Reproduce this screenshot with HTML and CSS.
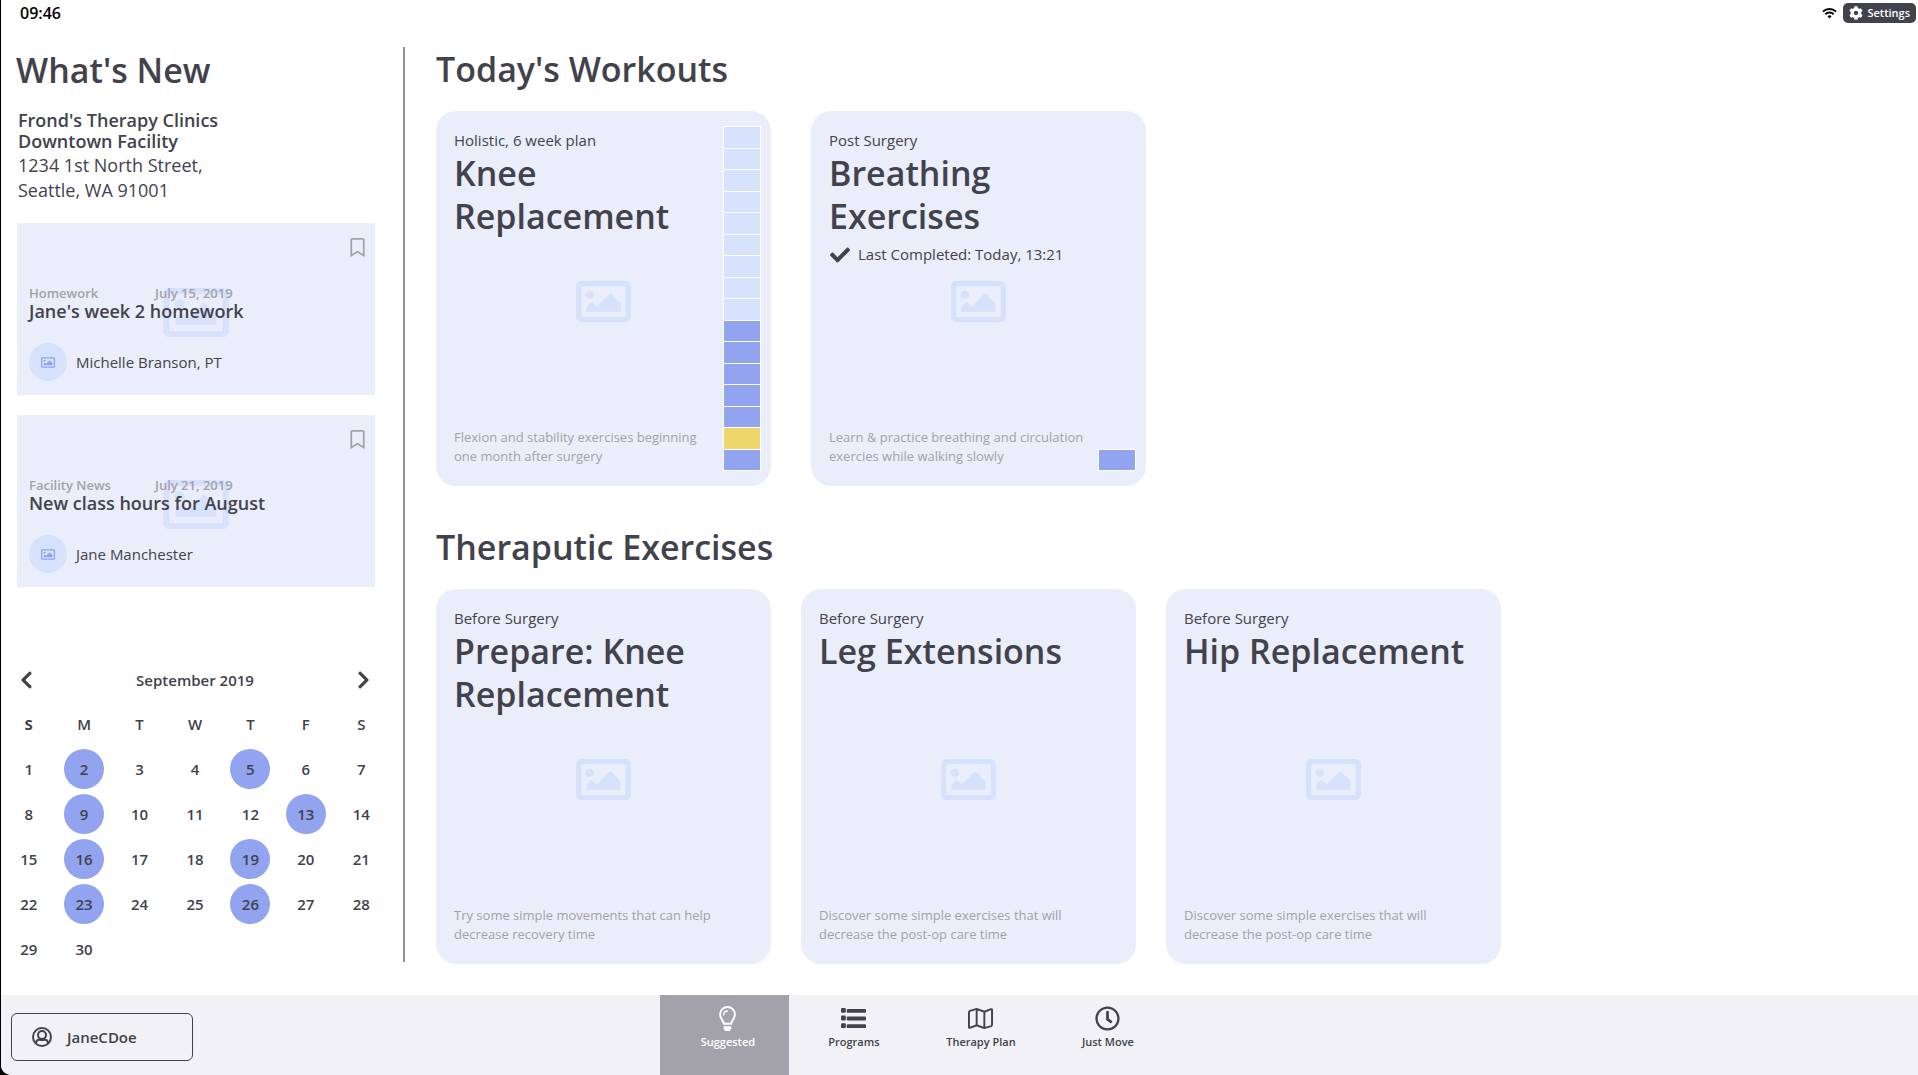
FILE: index.html
```html
<!DOCTYPE html>
<html lang="en">
<head>
  <meta charset="UTF-8">
  <meta name="viewport" content="width=device-width, initial-scale=1.0">
  <title>Frond's Therapy Clinics</title>
  <link rel="stylesheet" href="styles.css">
</head>
<body>
  <!-- shared icons -->
  <svg class="sprite" aria-hidden="true">
    <symbol id="image" viewBox="0 64 512 384">
      <path d="M464 64H48C21.49 64 0 85.49 0 112v288c0 26.51 21.49 48 48 48h416c26.51 0 48-21.49 48-48V112c0-26.51-21.49-48-48-48zm-6 336H54a6 6 0 0 1-6-6V118a6 6 0 0 1 6-6h404a6 6 0 0 1 6 6v276a6 6 0 0 1-6 6zM128 152c-22.091 0-40 17.909-40 40s17.909 40 40 40 40-17.909 40-40-17.909-40-40-40zM96 352h320v-80l-87.515-87.515c-4.686-4.686-12.284-4.686-16.971 0L192 304l-39.515-39.515c-4.686-4.686-12.284-4.686-16.971 0L96 304v48z"/>
    </symbol>
    <symbol id="bookmark" viewBox="0 0 384 512">
      <path d="M336 0H48C21.49 0 0 21.49 0 48v464l192-112 192 112V48c0-26.51-21.49-48-48-48zm0 428.43l-144-84-144 84V54a6 6 0 0 1 6-6h276c3.314 0 6 2.683 6 5.996V428.43z"/>
    </symbol>
  </svg>

  <div class="app">
    <header class="status-bar">
      <time>09:46</time>
      <div class="status-right">
        <svg class="wifi" viewBox="0 0 16 12" fill="none" stroke="#000" stroke-width="2">
          <path d="M1 4.6a10 10 0 0 1 14 0M3.6 7.3a6.2 6.2 0 0 1 8.8 0"/>
          <path d="M8 11.8L5.8 9.5a3.1 3.1 0 0 1 4.4 0z" fill="#000" stroke="none"/>
        </svg>
        <button class="settings" type="button">
          <svg viewBox="0 0 512 512"><path d="M487.4 315.7l-42.6-24.6c4.3-23.2 4.3-47 0-70.2l42.6-24.6c4.9-2.8 7.1-8.6 5.5-14-11.1-35.6-30-67.8-54.7-94.6-3.8-4.1-10-5.1-14.8-2.3L380.8 110c-17.9-15.4-38.5-27.3-60.8-35.1V25.8c0-5.6-3.9-10.5-9.4-11.7-36.7-8.2-74.3-7.8-109.2 0-5.5 1.2-9.4 6.1-9.4 11.7V75c-22.2 7.9-42.8 19.8-60.8 35.1L88.7 85.5c-4.9-2.8-11-1.9-14.8 2.3-24.7 26.7-43.6 58.9-54.7 94.6-1.7 5.4.6 11.2 5.5 14L67.3 221c-4.3 23.2-4.3 47 0 70.2l-42.6 24.6c-4.9 2.8-7.1 8.6-5.5 14 11.1 35.6 30 67.8 54.7 94.6 3.8 4.1 10 5.1 14.8 2.3l42.6-24.6c17.9 15.4 38.5 27.3 60.8 35.1v49.2c0 5.6 3.9 10.5 9.4 11.7 36.7 8.2 74.3 7.8 109.2 0 5.5-1.2 9.4-6.1 9.4-11.7v-49.2c22.2-7.9 42.8-19.8 60.8-35.1l42.6 24.6c4.9 2.8 11 1.9 14.8-2.3 24.7-26.7 43.6-58.9 54.7-94.6 1.5-5.5-.7-11.3-5.6-14.1zM256 336c-44.1 0-80-35.9-80-80s35.9-80 80-80 80 35.9 80 80-35.9 80-80 80z"/></svg>
          Settings
        </button>
      </div>
    </header>

    <div class="content">
      <aside class="sidebar">
        <h1>What's New</h1>
        <address>
          <strong>Frond's Therapy Clinics<br>Downtown Facility</strong>
          1234 1st North Street,<br>Seattle, WA 91001
        </address>

        <div class="news">
          <article class="news-card">
            <svg class="placeholder"><use href="#image"/></svg>
            <button class="bookmark" type="button" aria-label="Bookmark"><svg><use href="#bookmark"/></svg></button>
            <p class="news-meta"><span>Homework</span><span>July 15, 2019</span></p>
            <h3>Jane's week 2 homework</h3>
            <p class="author"><span class="avatar"><svg><use href="#image"/></svg></span>Michelle Branson, PT</p>
          </article>
          <article class="news-card">
            <svg class="placeholder"><use href="#image"/></svg>
            <button class="bookmark" type="button" aria-label="Bookmark"><svg><use href="#bookmark"/></svg></button>
            <p class="news-meta"><span>Facility News</span><span>July 21, 2019</span></p>
            <h3>New class hours for August</h3>
            <p class="author"><span class="avatar"><svg><use href="#image"/></svg></span>Jane Manchester</p>
          </article>
        </div>

        <div class="calendar">
          <div class="calendar-head">
            <button type="button" aria-label="Previous month">
              <svg viewBox="0 0 320 512"><path d="M34.52 239.03L228.87 44.69c9.37-9.37 24.57-9.37 33.94 0l22.67 22.67c9.36 9.36 9.37 24.52.04 33.9L131.49 256l154.02 154.75c9.34 9.38 9.32 24.54-.04 33.9l-22.67 22.67c-9.37 9.37-24.57 9.37-33.94 0L34.52 272.97c-9.37-9.37-9.37-24.57 0-33.94z"/></svg>
            </button>
            <span>September 2019</span>
            <button type="button" aria-label="Next month">
              <svg viewBox="0 0 320 512"><path d="M285.476 272.971L91.132 467.314c-9.373 9.373-24.569 9.373-33.941 0l-22.667-22.667c-9.357-9.357-9.375-24.522-.04-33.901L188.505 256 34.484 101.255c-9.335-9.379-9.317-24.544.04-33.901l22.667-22.667c9.373-9.373 24.569-9.373 33.941 0L285.475 239.03c9.373 9.372 9.373 24.568.001 33.941z"/></svg>
            </button>
          </div>
          <table>
            <thead>
              <tr><th class="first">S</th><th>M</th><th>T</th><th>W</th><th>T</th><th>F</th><th>S</th></tr>
            </thead>
            <tbody>
              <tr><td>1</td><td><span class="marked">2</span></td><td>3</td><td>4</td><td><span class="marked">5</span></td><td>6</td><td>7</td></tr>
              <tr><td>8</td><td><span class="marked">9</span></td><td>10</td><td>11</td><td>12</td><td><span class="marked">13</span></td><td>14</td></tr>
              <tr><td>15</td><td><span class="marked">16</span></td><td>17</td><td>18</td><td><span class="marked">19</span></td><td>20</td><td>21</td></tr>
              <tr><td>22</td><td><span class="marked">23</span></td><td>24</td><td>25</td><td><span class="marked">26</span></td><td>27</td><td>28</td></tr>
              <tr><td>29</td><td>30</td><td></td><td></td><td></td><td></td><td></td></tr>
            </tbody>
          </table>
        </div>
      </aside>

      <main>
        <section>
          <h2>Today's Workouts</h2>
          <div class="cards cards-wide">
            <article class="card">
              <svg class="placeholder"><use href="#image"/></svg>
              <div class="card-text">
                <p class="kicker">Holistic, 6 week plan</p>
                <h3>Knee Replacement</h3>
                <p class="desc">Flexion and stability exercises beginning one month after surgery</p>
              </div>
              <div class="progress">
                <i></i><i></i><i></i><i></i><i></i><i></i><i></i><i></i><i></i>
                <i class="done"></i><i class="done"></i><i class="done"></i><i class="done"></i><i class="done"></i>
                <i class="current"></i><i class="done"></i>
              </div>
            </article>
            <article class="card">
              <svg class="placeholder"><use href="#image"/></svg>
              <div class="card-text">
                <p class="kicker">Post Surgery</p>
                <h3>Breathing Exercises</h3>
                <p class="completed">
                  <svg viewBox="0 0 512 512"><path d="M173.898 439.404l-166.4-166.4c-9.997-9.997-9.997-26.206 0-36.204l36.203-36.204c9.997-9.998 26.207-9.998 36.204 0L192 312.69 432.095 72.596c9.997-9.997 26.207-9.997 36.204 0l36.203 36.204c9.997 9.997 9.997 26.206 0 36.204l-294.4 294.401c-9.998 9.997-26.207 9.997-36.204-.001z"/></svg>
                  Last Completed: Today, 13:21
                </p>
                <p class="desc">Learn &amp; practice breathing and circulation exercies while walking slowly</p>
              </div>
              <div class="progress"><i class="done"></i></div>
            </article>
          </div>
        </section>

        <section>
          <h2>Theraputic Exercises</h2>
          <div class="cards">
            <article class="card">
              <svg class="placeholder"><use href="#image"/></svg>
              <div class="card-text">
                <p class="kicker">Before Surgery</p>
                <h3>Prepare: Knee Replacement</h3>
                <p class="desc">Try some simple movements that can help decrease recovery time</p>
              </div>
            </article>
            <article class="card">
              <svg class="placeholder"><use href="#image"/></svg>
              <div class="card-text">
                <p class="kicker">Before Surgery</p>
                <h3>Leg Extensions</h3>
                <p class="desc">Discover some simple exercises that will decrease the post-op care time</p>
              </div>
            </article>
            <article class="card">
              <svg class="placeholder"><use href="#image"/></svg>
              <div class="card-text">
                <p class="kicker">Before Surgery</p>
                <h3>Hip Replacement</h3>
                <p class="desc">Discover some simple exercises that will decrease the post-op care time</p>
              </div>
            </article>
          </div>
        </section>
      </main>
    </div>

    <footer class="tab-bar">
      <div class="account">
        <button class="user" type="button">
          <svg viewBox="0 0 20 20" fill="none" stroke="currentColor" stroke-width="2">
            <circle cx="10" cy="10" r="9"/>
            <circle cx="10" cy="8" r="4"/>
            <path d="M3.8 16c.6-2.6 1.900-3.500 3.800-3.500 1.500.7 3.300.7 4.800 0 1.900 0 3.200.9 3.800 3.500"/>
          </svg>
          JaneCDoe
        </button>
      </div>
      <nav>
        <a class="active" href="#">
          <svg viewBox="0 0 26 26" fill="none" stroke="currentColor" stroke-width="2">
            <path d="M9.300 18.500C9 15.500 5.300 13.500 5.300 8.700a7.700 7.700 0 0 1 15.400 0c0 4.800-3.700 6.800-4 9.800z"/>
            <path d="M9 9.200c0-2.400 1.500-4 3.900-4" stroke-width="1.500" stroke-linecap="round"/>
            <path d="M9 21h8v2.500L15.500 26h-5L9 23.500z" fill="currentColor" stroke="none"/>
          </svg>
          Suggested
        </a>
        <a href="#">
          <svg viewBox="0 0 26 26" fill="currentColor">
            <rect x="0" y="2" width="5" height="5" rx="1"/><rect x="6" y="3" width="20" height="4" rx="1"/>
            <rect x="0" y="10" width="5" height="5" rx="1"/><rect x="6" y="11" width="20" height="4" rx="1"/>
            <rect x="0" y="18" width="5" height="5" rx="1"/><rect x="6" y="19" width="20" height="4" rx="1"/>
          </svg>
          Programs
        </a>
        <a href="#">
          <svg viewBox="0 0 26 26" fill="none" stroke="currentColor" stroke-width="2" stroke-linejoin="round">
            <path d="M1 6.500q0-1 1-1.400L9 3l8 3L24 3.300q1-.3 1 .700v15.500q0 1-1 1.400L17 23l-8-3L2 22.700q-1 .3-1-.7zM9 3v17M17 6v17"/>
          </svg>
          Therapy Plan
        </a>
        <a href="#">
          <svg viewBox="0 0 512 512" fill="currentColor"><path d="M256 8C119 8 8 119 8 256s111 248 248 248 248-111 248-248S393 8 256 8zm0 448c-110.500 0-200-89.500-200-200S145.500 56 256 56s200 89.500 200 200-89.500 200-200 200zm61.800-104.400l-84.900-61.700c-3.100-2.300-4.900-5.900-4.900-9.700V116c0-6.600 5.400-12 12-12h32c6.600 0 12 5.400 12 12v141.700l66.800 48.600c5.400 3.900 6.500 11.400 2.600 16.800L334.600 349c-3.900 5.300-11.400 6.500-16.800 2.600z"/></svg>
          Just Move
        </a>
      </nav>
    </footer>
  </div>
</body>
</html>
```
FILE: styles.css
```css
* {
  box-sizing: border-box;
}
body {
  margin: 0;
  background: #000;
  color: #42424d;
  font-family: 'Open Sans', 'Noto Sans', sans-serif;
  font-size: 15px;
  line-height: 21px;
}
h1, h2, h3, p {
  margin: 0;
  font-weight: 600;
}
p {
  font-weight: 400;
}
button {
  padding: 0;
  border: 0;
  background: none;
  color: inherit;
  font: inherit;
  cursor: pointer;
}
svg {
  display: block;
  flex: none;
}
.sprite {
  position: absolute;
  width: 0;
  height: 0;
}
.app {
  display: flex;
  flex-direction: column;
  min-height: 100vh;
  margin-left: 1px;
  background: #fff;
  border-bottom-left-radius: 10px;
  overflow: hidden;
}

/* status bar */
.status-bar {
  display: flex;
  justify-content: space-between;
  align-items: flex-start;
  height: 47px;
  padding: 3px 2px 0 19px;
  color: #000;
}
.status-bar time {
  font-size: 16px;
  font-weight: 600;
  line-height: 21px;
}
.status-right {
  display: flex;
  align-items: center;
  gap: 6px;
}
.wifi {
  width: 15px;
  height: 12px;
}
.settings {
  display: flex;
  align-items: center;
  gap: 4px;
  height: 20px;
  padding: 0 6px;
  border-radius: 5px;
  background: #42424d;
  color: #fff;
  font-size: 11px;
  font-weight: 600;
  line-height: 18px;
}
.settings svg {
  width: 14px;
  height: 14px;
  fill: #fff;
}

.content {
  display: flex;
  align-items: flex-start;
  flex: 1;
  gap: 31px;
  padding-bottom: 31px;
}
h1, h2 {
  font-size: 34px;
  line-height: 44px;
}

/* sidebar */
.sidebar {
  flex: none;
  width: 404px;
  border-right: 2px solid #919191;
}
.sidebar h1 {
  padding: 1px 0 0 15px;
}
address {
  margin: 18px 0 20px;
  padding-left: 17px;
  font-size: 18px;
  font-style: normal;
  line-height: 25px;
}
address strong {
  display: block;
  margin-bottom: 1px;
  font-weight: 600;
  line-height: 21px;
}
.news {
  display: flex;
  flex-direction: column;
  gap: 20px;
  padding: 0 28px 0 16px;
}
.news-card {
  position: relative;
  display: flex;
  flex-direction: column;
  min-height: 172px;
  padding: 15px 10px 14px 12px;
  background: #eaeefa;
}
.placeholder {
  position: absolute;
  fill: #d6e1fc;
}
.news-card .placeholder {
  top: 65px;
  left: 50%;
  width: 66px;
  height: 49px;
  margin-left: -33px;
}
.news-card > :not(.placeholder) {
  position: relative;
}
.bookmark {
  align-self: flex-end;
}
.bookmark svg {
  width: 15px;
  height: 19px;
  fill: #a3a1aa;
}
.news-meta {
  display: grid;
  grid-template-columns: 126px 1fr;
  margin-top: auto;
  color: #a3a1aa;
  font-size: 13px;
  font-weight: 600;
  line-height: 16px;
}
.news-card h3 {
  margin-bottom: 21px;
  font-size: 18px;
  line-height: 21px;
}
.author {
  display: flex;
  align-items: center;
  gap: 9px;
}
.avatar {
  display: grid;
  place-items: center;
  width: 38px;
  height: 38px;
  border-radius: 50%;
  background: #d6e1fc;
}
.avatar svg {
  width: 14px;
  height: 11px;
  fill: #92a3f0;
}

/* calendar */
.calendar {
  margin-top: 81px;
  padding-right: 14px;
  font-weight: 600;
}
.calendar-head {
  display: flex;
  justify-content: space-between;
  align-items: center;
  height: 24px;
  margin-bottom: 20px;
  padding: 0 19px;
}
.calendar-head svg {
  width: 13px;
  height: 20px;
  fill: #42424d;
}
table {
  width: 100%;
  table-layout: fixed;
  border-collapse: collapse;
}
th, td {
  padding: 0 0 20px;
  font-weight: 600;
  line-height: 25px;
  text-align: center;
}
th.first {
  font-weight: 700;
}
tr:last-child td {
  padding-bottom: 0;
}
.marked {
  display: block;
  width: 40px;
  margin: -8px auto -7px;
  border-radius: 50%;
  background: #92a3f0;
  line-height: 40px;
}

/* cards */
main {
  display: flex;
  flex-direction: column;
  gap: 39px;
}
h2 {
  margin-bottom: 20px;
}
.cards {
  display: flex;
  flex-wrap: wrap;
  gap: 30px;
}
.cards-wide {
  gap: 40px;
}
.card {
  position: relative;
  display: flex;
  width: 335px;
  min-height: 375px;
  padding: 15px 10px 15px 18px;
  border-radius: 20px;
  background: #eaeefa;
}
.card .placeholder {
  top: 170px;
  left: 50%;
  width: 55px;
  height: 41px;
  margin-left: -28px;
}
.card-text {
  position: relative;
  display: flex;
  flex: 1;
  flex-direction: column;
  padding: 4px 0 5px;
}
.card h3 {
  margin-top: 1px;
  font-size: 34px;
  line-height: 43px;
}
.desc {
  max-width: 260px;
  margin-top: auto;
  color: #a3a1aa;
  font-size: 13px;
  line-height: 19px;
}
.completed {
  display: flex;
  align-items: center;
  gap: 8px;
  margin-top: 6px;
  padding-left: 1px;
}
.completed svg {
  width: 20px;
  height: 20px;
  fill: #42424d;
}
.progress {
  display: flex;
  flex-direction: column;
  justify-content: flex-end;
  width: 38px;
}
.progress i {
  flex: 1;
  max-height: 22px;
  border: 1px solid #fff;
  border-bottom-width: 0;
  background: #d6e1fc;
}
.progress i:last-child {
  border-bottom-width: 1px;
}
.progress .done {
  background: #92a3f0;
}
.progress .current {
  background: #edd66a;
}

/* tab bar */
.tab-bar {
  display: grid;
  grid-template-columns: 34.4% 1fr;
  min-height: 80px;
  background: #f2f1f6;
}
.account {
  padding: 18px 10px 14px;
}
.user {
  display: flex;
  align-items: center;
  gap: 15px;
  width: 182px;
  height: 48px;
  padding: 0 20px;
  border: 1px solid #42424d;
  border-radius: 6px;
  font-weight: 600;
}
.user svg {
  width: 20px;
  height: 20px;
}
nav {
  display: flex;
}
nav a {
  display: flex;
  flex-direction: column;
  align-items: center;
  gap: 1px;
  width: 127px;
  padding: 11px 0 0 2px;
  color: #42424d;
  font-size: 11px;
  font-weight: 600;
  line-height: 20px;
  text-decoration: none;
}
nav a.active {
  width: 129px;
  padding-left: 6px;
  background: #a3a1aa;
  color: #fff;
}
nav svg {
  width: 25px;
  height: 25px;
}
```
